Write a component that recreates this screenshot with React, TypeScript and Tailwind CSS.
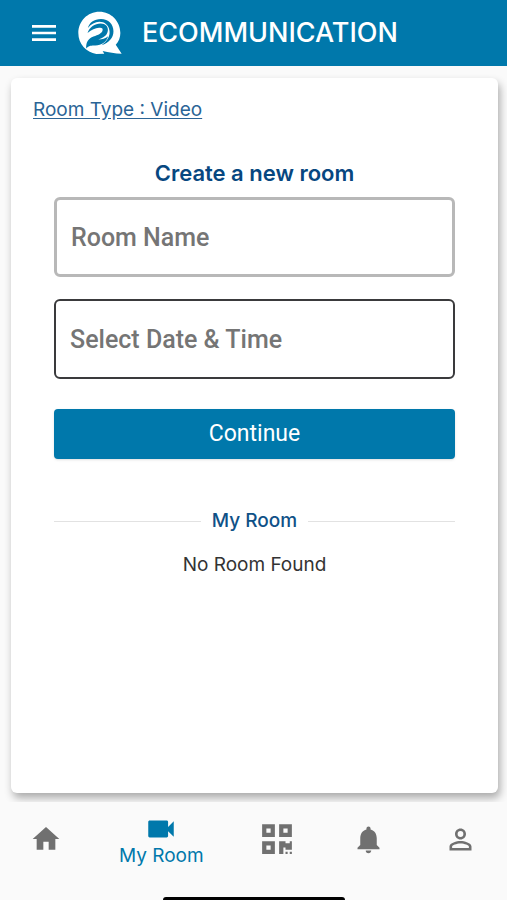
import React from "react";
import {
  MdHome,
  MdMenu,
  MdNotifications,
  MdPersonOutline,
  MdVideocam,
} from "react-icons/md";
import { FaQrcode } from "react-icons/fa";

const NAV_ITEMS = [
  { id: "home", label: "Home", icon: <MdHome size={32} /> },
  { id: "room", label: "My Room", icon: <MdVideocam size={34} /> },
  { id: "scan", label: "Scan", icon: <FaQrcode size={34} /> },
  { id: "alerts", label: "Notifications", icon: <MdNotifications size={33} /> },
  { id: "profile", label: "Profile", icon: <MdPersonOutline size={33} /> },
];

const Logo: React.FC = () => (
  <svg viewBox="54 27 134 132" className="h-11 w-11" aria-hidden="true">
    {/* Speech bubble */}
    <path
      fill="#fff"
      d="M119 28C83 28 55 57 55 93c0 34 24 59 55 64l24-1-5-8c19 4 37 8 58 8l-18-27c9-10 14-22 14-36 0-36-28-65-64-65z"
    />
    {/* Outer swoosh */}
    <path
      fill="#0078ab"
      d="M84 78c4-17 19-28 40-28 23 0 38 16 38 38 0 20-14 36-36 42 17-12 26-27 24-43-2-18-15-28-31-28-13 0-25 7-35 19z"
    />
    {/* Inner swoosh */}
    <path
      fill="#0078ab"
      d="M83 93c6-18 22-29 40-29 15 0 23 9 22 21-1 15-13 23-29 28 12 0 21-3 30-10-6 18-20 28-39 28-12 0-20 0-28 9-1-20 7-30 22-36 14-5 27-10 28-20 1-6-4-8-11-7-12 1-22 6-35 16z"
    />
  </svg>
);

const Header: React.FC = () => (
  <header className="flex h-[66px] shrink-0 items-center bg-[#0078ab] px-7 text-white">
    <button type="button" aria-label="Menu" className="mr-[18px]">
      <MdMenu size={32} />
    </button>
    <Logo />
    <h1 className="ml-5 text-[27px] leading-8 font-medium">ECOMMUNICATION</h1>
  </header>
);

const RoomForm: React.FC = () => (
  <form className="flex flex-col" onSubmit={(e) => e.preventDefault()}>
    <h2 className="mb-2 text-center text-[22px] leading-8 font-semibold text-[#074780]">
      Create a new room
    </h2>
    <input
      type="text"
      aria-label="Room Name"
      placeholder="Room Name"
      className="mb-[22px] h-20 w-full rounded-md border-3 border-[#b8b8b8] px-[14px] font-[Roboto,sans-serif] text-[25px] font-medium placeholder:text-[#757575]"
    />
    <input
      type="text"
      aria-label="Select Date & Time"
      placeholder="Select Date & Time"
      className="mb-[30px] h-20 w-full rounded-md border-2 border-[#3a3a3c] px-[14px] font-[Roboto,sans-serif] text-[25px] font-medium placeholder:text-[#757575]"
    />
    <button
      type="submit"
      className="h-[50px] w-full rounded-sm bg-[#0078ab] font-[Roboto,sans-serif] text-[23px] text-white shadow"
    >
      Continue
    </button>
  </form>
);

const BottomNav: React.FC = () => (
  <nav className="relative flex h-[98px] shrink-0 items-start bg-[#fafafa]">
    {NAV_ITEMS.map((item) =>
      item.id === "room" ? (
        <a
          key={item.id}
          href="#room"
          aria-current="page"
          className="flex h-[74px] flex-[1.5] flex-col items-center justify-center text-[#0078ab]"
        >
          {item.icon}
          <span className="text-[19px] leading-5">{item.label}</span>
        </a>
      ) : (
        <a
          key={item.id}
          href={`#${item.id}`}
          aria-label={item.label}
          className="flex h-[74px] flex-1 items-center justify-center text-[#707070]"
        >
          {item.icon}
        </a>
      )
    )}
    <div className="absolute bottom-0 left-1/2 h-[3px] w-[182px] -translate-x-1/2 rounded-t-md bg-black" />
  </nav>
);

const App: React.FC = () => (
  <div className="flex min-h-screen flex-col bg-[#fafafa] font-[Inter,sans-serif]">
    <Header />
    <main className="flex flex-1 flex-col pt-3 pr-[9px] pb-[9px] pl-[11px]">
      <section className="flex-1 rounded-md bg-white px-[22px] pt-5 shadow-[2px_5px_8px_0_rgba(0,0,0,0.32)]">
        <a
          href="#room-type"
          className="text-[19px] leading-6 text-[#2a6496] underline underline-offset-2"
        >
          Room Type : Video
        </a>
        <div className="px-[21px] pt-[35px]">
          <RoomForm />
          <div className="mt-[50px] flex items-center gap-[11px]">
            <hr className="flex-1 border-[#e2e2e2]" />
            <h3 className="text-[19px] leading-6 font-medium text-[#0f5187]">
              My Room
            </h3>
            <hr className="flex-1 border-[#e2e2e2]" />
          </div>
          <p className="mt-5 text-center text-[19px] leading-6 text-[#333]">
            No Room Found
          </p>
        </div>
      </section>
    </main>
    <BottomNav />
  </div>
);

export default App;
